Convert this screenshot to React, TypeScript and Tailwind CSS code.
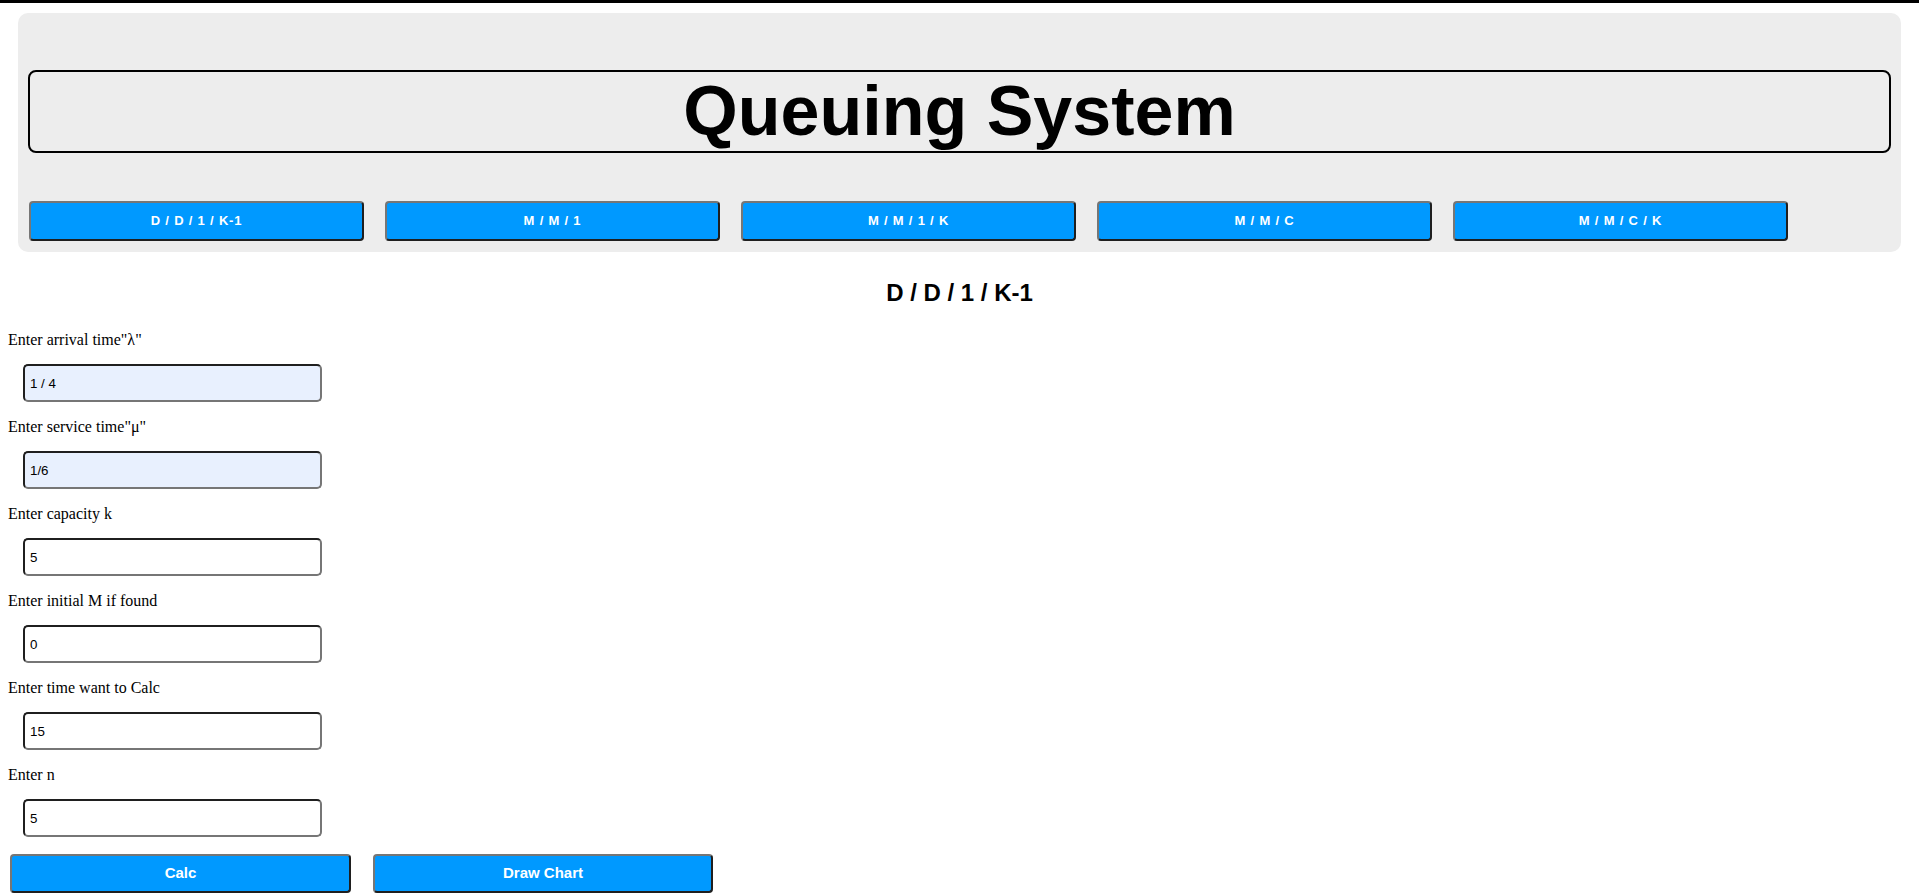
import React from "react";

const navItems = ["D / D / 1 / K-1", "M / M / 1", "M / M / 1 / K", "M / M / C", "M / M / C / K"];

const fields: { label: string; value: string; autofill: boolean }[] = [
  { label: 'Enter arrival time"λ"', value: "1 / 4", autofill: true },
  { label: 'Enter service time"μ"', value: "1/6", autofill: true },
  { label: "Enter capacity k", value: "5", autofill: false },
  { label: "Enter initial M if found", value: "0", autofill: false },
  { label: "Enter time want to Calc", value: "15", autofill: false },
  { label: "Enter n", value: "5", autofill: false },
];

export default function App() {
  return (
    <div className="min-h-screen bg-white font-['Liberation_Sans',Arial,sans-serif] text-black">
      <div className="h-[3px] w-full bg-black" />
      <div className="mx-[18px] mt-[10px] rounded-[10px] bg-[#ededed] px-[10px] pb-[11px] pt-[57px]">
        <h1 className="rounded-[8px] border-2 border-black text-center text-[70px] font-bold leading-[79px]">
          Queuing System
        </h1>
        <div className="mt-[48px] flex gap-[21px] pl-px">
          {navItems.map((t) => (
            <button
              key={t}
              className="h-[40px] w-[335px] rounded-[4px] border-2 border-b-[#1f1f1f] border-l-[#767676] border-r-[#1f1f1f] border-t-[#767676] bg-[#0099ff] text-[13px] font-bold tracking-[0.8px] text-white"
            >
              {t}
            </button>
          ))}
        </div>
      </div>

      <h2 className="mt-[27px] text-center text-[24px] font-bold leading-[27px]">D / D / 1 / K-1</h2>

      <div className="px-[8px] pt-[25px]">
        {fields.map((f, i) => (
          <div key={f.label} className={i === 0 ? "" : "mt-[16px]"}>
            <div className="font-['Liberation_Serif','Times_New_Roman',serif] text-[16px] leading-[18px]">
              {f.label}
            </div>
            <input
              readOnly
              value={f.value}
              className={`ml-[15px] mt-[15px] block h-[38px] w-[299px] rounded-[5px] border-2 border-b-[#767676] border-l-[#1f1f1f] border-r-[#767676] border-t-[#1f1f1f] pl-[5px] font-['Liberation_Sans',Arial,sans-serif] text-[13.33px] text-black outline-none ${
                f.autofill ? "bg-[#e8f0fe]" : "bg-white"
              }`}
            />
          </div>
        ))}
        <div className="mt-[17px] flex pl-[2px]">
          <button className="h-[39px] w-[341px] rounded-[4px] border-2 border-b-[#1f1f1f] border-l-[#767676] border-r-[#1f1f1f] border-t-[#767676] bg-[#0099ff] text-[15px] font-bold text-white">
            Calc
          </button>
          <button className="ml-[22px] h-[39px] w-[340px] rounded-[4px] border-2 border-b-[#1f1f1f] border-l-[#767676] border-r-[#1f1f1f] border-t-[#767676] bg-[#0099ff] text-[15px] font-bold text-white">
            Draw Chart
          </button>
        </div>
      </div>
    </div>
  );
}
